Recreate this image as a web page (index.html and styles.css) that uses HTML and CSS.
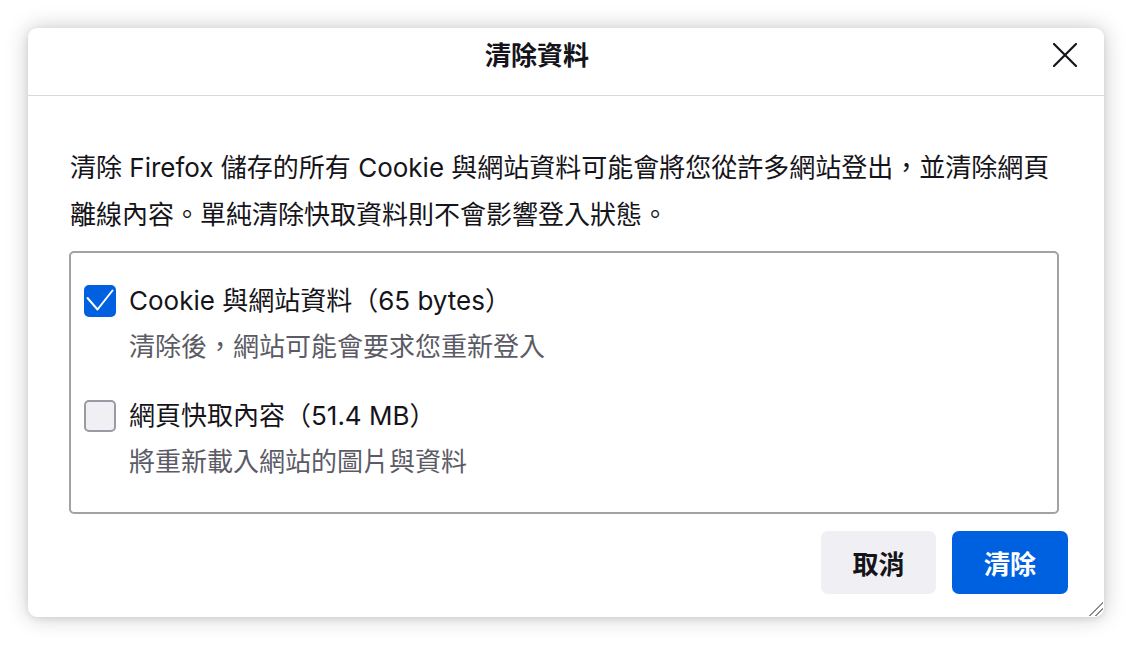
FILE: index.html
```html
<!DOCTYPE html>
<html lang="zh-Hant">
<head>
  <meta charset="utf-8">
  <title>清除資料</title>
  <link rel="stylesheet" href="styles.css">
</head>
<body>
  <div class="dialog">
    <div class="dialog-header">
      <h1 class="dialog-title">清除資料</h1>
      <button type="button" class="close-button" aria-label="關閉">
        <svg width="24" height="24" viewBox="0 0 24 24">
          <path d="M1 1 L23 23 M23 1 L1 23" stroke="#15141a" stroke-width="2.2" fill="none" stroke-linecap="round"/>
        </svg>
      </button>
    </div>

    <div class="dialog-body">
      <p class="description">清除 Firefox 儲存的所有 Cookie 與網站資料可能會將您從許多網站登出，並清除網頁離線內容。單純清除快取資料則不會影響登入狀態。</p>

      <div class="item-list">
        <label class="item">
          <span class="checkbox checked">
            <svg width="32" height="32" viewBox="0 0 32 32">
              <path d="M3.5 13 L13.5 24.5 L28.5 5.5" stroke="#fff" stroke-width="2" fill="none" stroke-linecap="round" stroke-linejoin="round"/>
            </svg>
          </span>
          <span class="item-label">Cookie 與網站資料（65 bytes）</span>
          <span class="item-desc">清除後，網站可能會要求您重新登入</span>
        </label>
        <label class="item">
          <span class="checkbox"></span>
          <span class="item-label">網頁快取內容（51.4 MB）</span>
          <span class="item-desc">將重新載入網站的圖片與資料</span>
        </label>
      </div>
    </div>

    <div class="dialog-footer">
      <button type="button" class="button">取消</button>
      <button type="button" class="button primary">清除</button>
    </div>

    <span class="resizer"></span>
  </div>
</body>
</html>
```

FILE: styles.css
```css
html, body {
  margin: 0;
  background-color: #ffffff;
}
body {
  padding: 28px;
  font-family: "Inter", "Noto Sans CJK TC", sans-serif;
  color: #15141a;
}

.dialog {
  position: relative;
  width: 1076px;
  height: 589px;
  background: #fff;
  border-radius: 9px;
  box-shadow: 0 0 22px rgba(0, 0, 0, 0.22), 0 2px 6px rgba(0, 0, 0, 0.08);
  display: flex;
  flex-direction: column;
  box-sizing: border-box;
}

.dialog-header {
  height: 55px;
  padding-bottom: 12px;
  border-bottom: 1px solid #d9d9d9;
  display: flex;
  align-items: center;
  justify-content: center;
  position: relative;
}
.dialog-title {
  margin: 0 58px 0 0;
  font-size: 26px;
  font-weight: 700;
  line-height: 30px;
}
.close-button {
  position: absolute;
  right: 27px;
  top: 15px;
  width: 24px;
  height: 24px;
  padding: 0;
  border: 0;
  background: none;
}
.close-button svg {
  display: block;
}

.dialog-body {
  padding: 48px 45px 0 42px;
}
.description {
  margin: 0;
  max-width: 986px;
  font-size: 26px;
  line-height: 47px;
}

.item-list {
  margin: 13px 0 0 -1px;
  border: 2px solid #a2a2a6;
  border-radius: 5px;
  padding: 25px 14px 27px 13px;
  display: flex;
  flex-direction: column;
  gap: 23px;
}
.item {
  display: grid;
  grid-template-columns: 32px 1fr;
  column-gap: 13px;
  align-items: center;
  font-size: 26px;
  line-height: 46px;
}
.checkbox {
  width: 32px;
  height: 32px;
  box-sizing: border-box;
  border: 2px solid #9a9aa4;
  border-radius: 5px;
  background: #f0f0f4;
}
.checkbox.checked {
  border: 0;
  background: #0061e0;
}
.checkbox svg {
  display: block;
}
.item-desc {
  grid-column: 2;
  color: #5b5b66;
}

.dialog-footer {
  margin-top: auto;
  padding: 0 36px 23px;
  display: flex;
  justify-content: flex-end;
  gap: 16px;
}
.button {
  width: 115px;
  height: 63px;
  border: 0;
  border-radius: 7px;
  background: #f0f0f4;
  color: #15141a;
  font-family: inherit;
  font-size: 26px;
  font-weight: 700;
}
.button.primary {
  width: 116px;
  background: #0061e0;
  color: #fff;
}

.resizer {
  position: absolute;
  right: 1px;
  bottom: 1px;
  width: 14px;
  height: 14px;
  background: linear-gradient(135deg, transparent 48%, #8a8a8a 49%, #8a8a8a 54%, transparent 55%, transparent 70%, #8a8a8a 71%, #8a8a8a 76%, transparent 77%);
}
```
